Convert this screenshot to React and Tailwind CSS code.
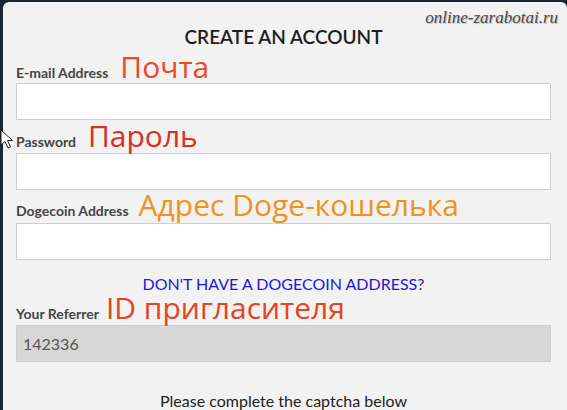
import React from "react";

const lato = { fontFamily: "Lato, 'Open Sans', sans-serif" };
const sans = { fontFamily: "'Open Sans', 'Noto Sans', sans-serif" };

function Field({ label, note, noteColor, gap, value, grey, inputMt }) {
  return (
    <div>
      <div className="flex items-baseline">
        <span className="text-[14px] leading-none font-bold text-[#454545]" style={lato}>
          {label}
        </span>
        <span
          className={`text-[30px] leading-none ${noteColor}`}
          style={{ ...sans, marginLeft: gap }}
        >
          {note}
        </span>
      </div>
      <div
        className={`h-[37px] border border-[#cfcfcf] flex items-center px-[6px] ${grey ? "bg-[#d7d7d7]" : "bg-white"}`}
        style={{ marginTop: inputMt }}
      >
        {value && (
          <span className="text-[16px] text-[#555]" style={lato}>
            {value}
          </span>
        )}
      </div>
    </div>
  );
}

export default function App() {
  return (
    <div className="w-[567px] h-[410px] bg-[#1b2631] pl-[3px] pt-[2px] overflow-hidden">
      <div className="relative h-full bg-[#f2f2f2] rounded-t-[6px] pl-[13px] pr-[16px]">
        <div
          className="absolute right-[9px] top-[3px] text-[17px] italic text-[#4a4a4a] [text-shadow:1px_1px_1px_rgba(0,0,0,0.25)]"
          style={{ fontFamily: "'Liberation Serif', serif" }}
        >
          online-zarabotai.ru
        </div>
        <svg
          className="absolute left-[-3px] top-[127px]"
          width="16"
          height="22"
          viewBox="0 0 16 22"
        >
          <path
            d="M1 1 L1 16 L5 12.5 L8 19 L10.5 18 L7.5 11.5 L12.5 11.5 Z"
            fill="#fff"
            stroke="#222"
            strokeWidth="1"
            strokeLinejoin="round"
          />
        </svg>

        <div className="pt-[23px] text-center text-[19px] leading-[24px] font-semibold text-[#1e1e1e]" style={lato}>
          CREATE AN ACCOUNT
        </div>

        <div className="mt-[3px]">
          <Field label="E-mail Address" note="Почта" noteColor="text-[#ec4a22]" gap="12px" inputMt="1px" />
        </div>
        <div className="mt-[1px]">
          <Field label="Password" note="Пароль" noteColor="text-[#dc2e22]" gap="12px" inputMt="2px" />
        </div>
        <div className="mt-[0px]">
          <Field label="Dogecoin Address" note="Адрес Doge-кошелька" noteColor="text-[#f0921c]" gap="10px" inputMt="3px" />
        </div>

        <div className="mt-[17px] text-center text-[16px] leading-[14px] text-[#1a1ad6]" style={lato}>
          DON'T HAVE A DOGECOIN ADDRESS?
        </div>

        <div className="mt-[2px]">
          <Field label="Your Referrer" note="ID пригласителя" noteColor="text-[#e6431f]" gap="7px" inputMt="2px" value="142336" grey />
        </div>

        <div className="mt-[29px] text-center text-[16px] leading-[20px] text-[#222]" style={lato}>
          Please complete the captcha below
        </div>
      </div>
    </div>
  );
}
